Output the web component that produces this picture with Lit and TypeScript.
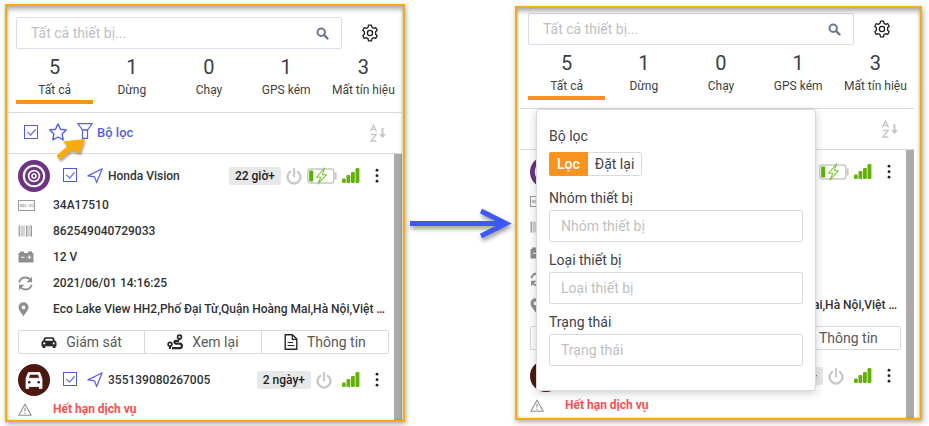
import { LitElement, html, css, svg, nothing } from "lit";
import { customElement, property } from "lit/decorators.js";

interface Stat {
  count: number;
  label: string;
}

interface Device {
  id: string;
  kind: "moto" | "car";
  name: string;
  idle: string;
  charging: boolean;
  rows: { icon: keyof typeof icons; text: string; alert?: boolean }[];
  actions: boolean;
}

const icon = (w: number, h: number, body: unknown) =>
  html`<svg width=${w} height=${h} viewBox="0 0 ${w} ${h}" aria-hidden="true" fill="none">${body}</svg>`;

const icons = {
  search: icon(13, 13, svg`<circle cx="5.200" cy="5.200" r="3.700" stroke="#6b7690" stroke-width="2"/><path d="M8.200 8.200 11.500 11.500" stroke="#6b7690" stroke-width="2.400" stroke-linecap="round"/>`),
  gear: icon(18, 18, svg`<path d="M7.500 1.200h3l.5 2.200 1.500.9 2.200-.7 1.500 2.600-1.600 1.500v2.600l1.600 1.500-1.500 2.600-2.200-.7-1.500.9-.5 2.200h-3L7 14.600l-1.500-.9-2.200.7-1.500-2.600 1.600-1.500V7.700L1.800 6.200l1.500-2.600 2.200.7L7 3.400z" stroke="#1d1f23" stroke-width="1.300" stroke-linejoin="round"/><circle cx="9" cy="9" r="2.600" stroke="#1d1f23" stroke-width="1.300"/>`),
  star: icon(18, 18, svg`<path d="M9 .9 11.500 6.200 17.300 7 13.100 11 14.200 16.800 9 14 3.800 16.800 4.900 11 .7 7 6.500 6.200z" stroke="#5560e0" stroke-width="1.400" stroke-linejoin="round"/>`),
  filter: icon(16, 16, svg`<path d="M.8.700h14.400L10.500 7H5.500z" stroke="#5560e0" stroke-width="1.200" stroke-linejoin="round"/><path d="M5.500 7h5v8.300h-5z" stroke="#5560e0" stroke-width="1.200"/>`),
  sort: icon(18, 18, svg`<path d="M1.500 7.500 4.500 1 7.500 7.500M2.600 5.400h3.800M1.800 10.500h5.400L1.800 17h5.600" stroke="#c4c6c9" stroke-width="1.300"/><path d="M13.500 4v9" stroke="#c4c6c9" stroke-width="2"/><path d="M10 10h7l-3.500 4z" fill="#c4c6c9"/>`),
  moto: icon(32, 32, svg`<circle cx="16" cy="16" r="16" fill="#6c3483"/><circle cx="16" cy="16" r="10.200" stroke="#fff" stroke-width="2"/><circle cx="16" cy="16" r="5.400" stroke="#fff" stroke-width="1.700"/><circle cx="16" cy="16" r="2" stroke="#fff" stroke-width="1.500"/>`),
  car: icon(32, 32, svg`<circle cx="16" cy="16" r="16" fill="#4a1a10"/><path d="M10.300 8.500h11.400l2.300 6.300v9.700h-2.700v-2H10.700v2H8v-9.700zM11.700 10.300l-1.300 4h11.200l-1.300-4z" fill="#fff" fill-rule="evenodd" stroke="#fff" stroke-width=".8" stroke-linejoin="round"/><circle cx="11.300" cy="18.300" r="1.300" fill="#4a1a10"/><circle cx="20.700" cy="18.300" r="1.300" fill="#4a1a10"/>`),
  nav: icon(16, 16, svg`<path d="M15.200.8 9.600 14.600 7.600 8.900.9 7.900z" stroke="#5560e0" stroke-width="1.200" stroke-linejoin="round"/>`),
  power: icon(16, 17, svg`<path d="M5 3.200a6.500 6.500 0 1 0 6 0" stroke="#c9c9c9" stroke-width="2.400"/><path d="M8 1v7.500" stroke="#c9c9c9" stroke-width="2.200" stroke-linecap="round"/>`),
  battery: icon(30, 18, svg`<rect x=".8" y="2" width="26" height="14" rx="2.500" stroke="#c9c9c9" stroke-width="1.400"/><path d="M28 6h1v6h-1z" stroke="#c9c9c9" stroke-width="1.200"/><rect x="2.200" y="3.600" width="4" height="11" rx="1" fill="#58b200"/><path d="M17.500 1 9.500 10.300h4.300L11 17l8.500-9.300h-4z" fill="#fff" stroke="#7cc832" stroke-width="1.100" stroke-linejoin="round"/>`),
  signal: icon(18, 16, svg`<g fill="#63b207"><rect x="0" y="10.500" width="3.800" height="4.500" rx="1.200"/><rect x="4.500" y="7" width="3.800" height="8" rx="1.200"/><rect x="9" y="4" width="3.800" height="11" rx="1.200"/><rect x="13.500" y="0" width="3.900" height="15" rx="1.200"/></g>`),
  dots: icon(4, 16, svg`<g fill="#1d1f23"><circle cx="2" cy="2.200" r="1.400"/><circle cx="2" cy="7.700" r="1.400"/><circle cx="2" cy="13.200" r="1.400"/></g>`),
  plate: icon(18, 11, svg`<rect x=".5" y=".5" width="16" height="10" stroke="#9a9a9a"/><path d="M2.200 7V4.300h1.300V7M2.200 5.800h1.300M4.700 4.300h1.200V7H4.700zM8.300 4.300H7.100V7h1.200M9 5.700h1M11.300 4.300V7M12.400 4.300h.9v1.300h-.9V7h.9M14.300 4.300h.9V7h-.9" stroke="#9a9a9a" stroke-width=".6"/>`),
  barcode: icon(16, 12, svg`<path d="M1 .5v11M4 .5v11M6 .5v11M8.500.5v11M11 .5v11M13.500.5v11" stroke="#a5a5a5" stroke-width="1"/><path d="M1.800.5v11M9 .5v11M13 .5v11" stroke="#8a8a8a" stroke-width=".8"/>`),
  cell: icon(16, 12, svg`<path d="M2 2V.5h4V2h4V.5h4V2h1.500v9.500H.5V2z" fill="#8f8f8f"/><path d="M3 6.300h3.500M9.600 6.300h3.600M11.400 4.500v3.600" stroke="#fff" stroke-width="1.100"/>`),
  refresh: icon(15, 15, svg`<path d="M1.300 6.200C2.200 3 4.600 1.500 7.500 1.500c2 0 3.600.8 4.700 2M13.700 8.800c-.9 3.200-3.300 4.700-6.200 4.700-2 0-3.600-.8-4.700-2" stroke="#8f8f8f" stroke-width="1.800"/><path d="M14 .8v5.400H8.600zM1 14.200V8.800h5.400z" fill="#8f8f8f"/>`),
  pin: icon(11, 15, svg`<path d="M5.500.3a5 5 0 0 1 5 5c0 3.300-3 5.300-5 9.200-2-3.900-5-5.900-5-9.200a5 5 0 0 1 5-5zm0 3.200a1.900 1.900 0 1 0 0 3.800 1.900 1.900 0 0 0 0-3.800z" fill="#8f8f8f" fill-rule="evenodd"/>`),
  warn: icon(14, 13, svg`<path d="M7 1.200 13.200 12.200H.8z" stroke="#8f8f8f" stroke-width="1.100" stroke-linejoin="round"/><path d="M7 4.800v3.700M7 9.700v1.200" stroke="#8f8f8f" stroke-width="1.100"/>`),
  track: icon(16, 13, svg`<path d="M4.300 1.200h7.400c.6 0 1 .3 1.200.8l1 2.700c1 .3 1.600 1.100 1.600 2.100v3.400h-1V12h-2.700v-1.800H4.200V12H1.500v-1.800h-1V6.800c0-1 .6-1.800 1.600-2.100l1-2.700c.2-.5.600-.8 1.200-.8zm.5 1.600-.8 2h8l-.8-2zM3.300 6.300a1.100 1.100 0 1 0 0 2.200 1.100 1.100 0 0 0 0-2.200zm9.400 0a1.100 1.100 0 1 0 0 2.200 1.100 1.100 0 0 0 0-2.200z" fill="#25282c" fill-rule="evenodd"/>`),
  route: icon(16, 16, svg`<circle cx="12.500" cy="3" r="1.900" stroke="#25282c" stroke-width="1.700"/><path d="M12.500 5v1.300M3 12.500v2.600" stroke="#25282c" stroke-width="2"/><circle cx="3" cy="10.300" r="1.900" stroke="#25282c" stroke-width="1.700"/><path d="M12 6.800H9c-2 0-2 2.700 0 2.900h3.800c2.800.3 2.800 4.300 0 4.500H5" stroke="#25282c" stroke-width="2.200"/>`),
  file: icon(14, 16, svg`<path d="M1.200.8h7.300l4.300 4.300v10.100H1.200z" stroke="#25282c" stroke-width="1.400" stroke-linejoin="round"/><path d="M8.300.8v4.500h4.500M3.600 8.500h5.400M3.600 11.500h6.800" stroke="#25282c" stroke-width="1.200"/>`),
};

const stats: Stat[] = [
  { count: 5, label: "Tất cả" },
  { count: 1, label: "Dừng" },
  { count: 0, label: "Chạy" },
  { count: 1, label: "GPS kém" },
  { count: 3, label: "Mất tín hiệu" },
];

const devices: Device[] = [
  {
    id: "honda",
    kind: "moto",
    name: "Honda Vision",
    idle: "22 giờ+",
    charging: true,
    rows: [
      { icon: "plate", text: "34A17510" },
      { icon: "barcode", text: "862549040729033" },
      { icon: "cell", text: "12 V" },
      { icon: "refresh", text: "2021/06/01 14:16:25" },
      { icon: "pin", text: "Eco Lake View HH2,Phố Đại Từ,Quận Hoàng Mai,Hà Nội,Việt Nam" },
    ],
    actions: true,
  },
  {
    id: "car",
    kind: "car",
    name: "355139080267005",
    idle: "2 ngày+",
    charging: false,
    rows: [{ icon: "warn", text: "Hết hạn dịch vụ", alert: true }],
    actions: false,
  },
];

const tick = css`
  .check {
    appearance: none;
    box-sizing: border-box;
    display: grid;
    place-items: center;
    width: 14px;
    height: 14px;
    margin: 0 0 2px;
    border: 1px solid #4f5ae0;
  }
  .check:checked::after {
    content: "";
    width: 4px;
    height: 7px;
    margin-bottom: 2px;
    border: solid #4f5ae0;
    border-width: 0 1px 1px 0;
    transform: rotate(42deg);
  }
`;

@customElement("filter-form")
class FilterForm extends LitElement {
  static styles = css`
    :host {
      display: block;
      box-sizing: border-box;
      padding: 16px 12px;
      background: #fff;
      border: 1px solid #d9d9d9;
      border-radius: 3px;
      box-shadow: 0 2px 8px rgba(0, 0, 0, 0.2);
      font: 14px/20px Roboto, sans-serif;
      color: #3f4347;
    }
    .title,
    .label {
      display: block;
    }
    .actions {
      display: flex;
      margin: 6px 0 12px;
    }
    .btn {
      box-sizing: border-box;
      height: 24px;
      padding: 0 7px;
      font: inherit;
      line-height: 20px;
      color: inherit;
      background: #fff;
      border: 1px solid #d9d9d9;
      border-left: 0;
      border-radius: 0 2px 2px 0;
    }
    .primary {
      font-weight: 500;
      color: #fff;
      background: #f7931e;
      border: 1px solid #f7931e;
      border-radius: 2px 0 0 2px;
    }
    .field {
      box-sizing: border-box;
      display: block;
      width: 100%;
      height: 32px;
      margin: 2px 0 8px;
      padding: 0 11px;
      font: inherit;
      color: inherit;
      background: #fff;
      border: 1px solid #d9d9d9;
      border-radius: 2px;
      outline: none;
    }
    .field::placeholder {
      color: #bfbfbf;
    }
  `;

  render() {
    const fields = ["Nhóm thiết bị", "Loại thiết bị", "Trạng thái"];
    return html`
      <span class="title">Bộ lọc</span>
      <div class="actions">
        <button class="btn primary">Lọc</button>
        <button class="btn">Đặt lại</button>
      </div>
      ${fields.map(
        (f, i) => html`
          <label class="label" for="f${i}">${f}</label>
          <input class="field" id="f${i}" type="text" placeholder=${f} />
        `
      )}
    `;
  }
}

@customElement("device-item")
class DeviceItem extends LitElement {
  @property({ attribute: false }) device!: Device;

  static styles = [
    tick,
    css`
      :host {
        display: block;
        font: 500 12px/18px Roboto, sans-serif;
        color: #2f3337;
      }
      svg {
        display: block;
      }
      .head {
        display: flex;
        align-items: center;
        height: 32px;
      }
      .select {
        margin: 0 10px 2px 13px;
      }
      .icon-btn {
        padding: 0;
        border: 0;
        background: none;
      }
      .name {
        margin-left: 5px;
        flex: 1;
      }
      .idle {
        padding: 0 6px;
        background: #e8e8e8;
        border-radius: 2px;
        color: #1d1f23;
      }
      .power {
        margin: 0 5px;
      }
      .signal {
        margin: 0 15px 0 5px;
      }
      .more {
        margin-right: 10px;
      }
      .row {
        display: flex;
        align-items: center;
        height: 26px;
      }
      .lead {
        flex: none;
        width: 35px;
      }
      .text {
        overflow: hidden;
        white-space: nowrap;
        text-overflow: ellipsis;
      }
      .alert {
        font-weight: 700;
        color: #ff4d4f;
      }
      .actions {
        display: flex;
        margin: 8px 0 10px;
        border: 1px solid #d9d9d9;
        border-radius: 2px;
      }
      .action {
        flex: auto;
        display: flex;
        align-items: center;
        justify-content: center;
        gap: 9px;
        height: 22px;
        padding: 0 12px;
        border: 0;
        background: none;
        font: 14px/20px Roboto, sans-serif;
        color: #595959;
      }
      .action + .action {
        border-left: 1px solid #d9d9d9;
      }
    `,
  ];

  render() {
    const d = this.device;
    return html`
      <div class="head">
        ${icons[d.kind]}
        <input class="check select" type="checkbox" checked aria-label=${d.name} />
        <button class="icon-btn" aria-label="Định vị">${icons.nav}</button>
        <span class="name">${d.name}</span>
        <span class="idle">${d.idle}</span>
        <span class="power">${icons.power}</span>
        ${d.charging ? icons.battery : nothing}
        <span class="signal">${icons.signal}</span>
        <button class="icon-btn more" aria-label="Thêm">${icons.dots}</button>
      </div>
      ${d.rows.map(
        (r) => html`
          <div class="row">
            <span class="lead">${icons[r.icon]}</span>
            <span class="text ${r.alert ? "alert" : ""}">${r.text}</span>
          </div>
        `
      )}
      ${d.actions
        ? html`
            <div class="actions">
              <button class="action">${icons.track}Giám sát</button>
              <button class="action">${icons.route}Xem lại</button>
              <button class="action">${icons.file}Thông tin</button>
            </div>
          `
        : nothing}
    `;
  }
}

@customElement("device-panel")
class DevicePanel extends LitElement {
  @property({ type: Boolean, attribute: "filter-open", reflect: true }) filterOpen = false;

  static styles = [
    tick,
    css`
      :host {
        display: block;
        position: relative;
        box-sizing: border-box;
        overflow: hidden;
        padding: 11px 1px 0;
        border: 2px solid #f9ab0b;
        background: #fff;
        font: 12px/18px Roboto, sans-serif;
        color: #3a3f44;
      }
      :host([filter-open]) {
        padding: 5px 6px 0 3px;
      }
      .shade {
        position: absolute;
        inset: 0;
        box-shadow: inset 0 4px 4px rgba(0, 0, 0, 0.25), inset 0 0 3px rgba(0, 0, 0, 0.2);
        pointer-events: none;
      }
      svg {
        display: block;
      }
      .top {
        display: flex;
        padding: 0 4px 0 8px;
      }
      .search {
        flex: 1;
        display: flex;
        align-items: center;
        box-sizing: border-box;
        height: 32px;
        padding: 0 12px 0 14px;
        border: 1px solid #dcdfe9;
        border-radius: 2px;
      }
      .query {
        flex: 1;
        min-width: 0;
        padding: 0;
        border: 0;
        outline: none;
        background: none;
        font: 14px/20px Roboto, sans-serif;
        color: inherit;
      }
      .query::placeholder {
        color: #bfbfbf;
      }
      .icon-btn {
        padding: 0;
        border: 0;
        background: none;
      }
      .gear {
        display: grid;
        place-items: center;
        width: 56px;
      }
      .stats {
        display: grid;
        grid-template-columns: repeat(5, 1fr);
        margin: 6px 0 8px 8px;
      }
      .stat {
        padding: 0 0 1px;
        border: 0;
        border-bottom: 4px solid transparent;
        background: none;
        font: inherit;
        color: inherit;
        white-space: nowrap;
      }
      .active {
        border-color: #f7931e;
      }
      .count {
        display: block;
        margin-bottom: 2px;
        font-size: 20px;
        line-height: 24px;
      }
      .bar {
        position: relative;
        display: flex;
        align-items: center;
        height: 40px;
        padding: 0 15px 0 16px;
        border: solid #d9d9d9;
        border-width: 1px 0;
      }
      .star {
        margin: 0 10px 2px 11px;
      }
      .filter {
        display: flex;
        align-items: center;
        gap: 4px;
        margin-right: auto;
        font: 500 13px/18px Roboto, sans-serif;
        color: #5560e0;
      }
      .filter svg {
        margin-bottom: 4px;
      }
      .popup {
        position: absolute;
        z-index: 1;
        top: 0;
        left: 16px;
        width: 280px;
      }
      .list {
        display: flex;
      }
      .items {
        flex: 1;
        min-width: 0;
        padding: 6px 5px 0 10px;
      }
      .thumb {
        width: 8px;
        background: #ababab;
      }
      .cursor {
        position: absolute;
        left: 46px;
        top: 22px;
        filter: drop-shadow(1px 2px 1px rgba(0, 0, 0, 0.35));
      }
    `,
  ];

  render() {
    return html`
      <div class="shade"></div>
      <div class="top">
        <div class="search">
          <input class="query" type="text" placeholder="Tất cả thiết bị..." aria-label="Tất cả thiết bị" />
          <button class="icon-btn" aria-label="Tìm kiếm">${icons.search}</button>
        </div>
        <button class="icon-btn gear" aria-label="Cài đặt">${icons.gear}</button>
      </div>
      <div class="stats">
        ${stats.map(
          (s, i) => html`
            <button class="stat ${i === 0 ? "active" : ""}">
              <span class="count">${s.count}</span>${s.label}
            </button>
          `
        )}
      </div>
      <div class="bar">
        <input class="check" type="checkbox" checked aria-label="Chọn tất cả" />
        <button class="icon-btn star" aria-label="Yêu thích">${icons.star}</button>
        <button class="icon-btn filter">${icons.filter}Bộ lọc</button>
        <button class="icon-btn" aria-label="Sắp xếp">${icons.sort}</button>
        ${this.filterOpen
          ? html`<filter-form class="popup"></filter-form>`
          : html`<svg class="cursor" width="34" height="28" viewBox="0 0 34 28" aria-hidden="true">
              <path d="M31 4 9 6.500 13.500 11 2.500 20.500 6 25 17.500 15.500 26 18.500z" fill="#f9ab0b" />
            </svg>`}
      </div>
      <div class="list">
        <div class="items">${devices.map((d) => html`<device-item .device=${d}></device-item>`)}</div>
        <div class="thumb"></div>
      </div>
    `;
  }
}

@customElement("app-root")
class AppRoot extends LitElement {
  static styles = css`
    :host {
      display: grid;
      grid-template-columns: 400fr 110fr 407fr;
      box-sizing: border-box;
      height: 100vh;
      padding: 4px 7px 4px 5px;
      background: #fff;
    }
    .panel {
      min-width: 0;
      box-shadow: 1px 2px 5px rgba(0, 0, 0, 0.35);
    }
    .after {
      margin: 2px 0;
    }
    .arrow {
      place-self: center;
      width: 100%;
      height: 60px;
      padding-top: 20px;
      filter: drop-shadow(1px 3px 2px rgba(0, 0, 0, 0.4));
    }
  `;

  render() {
    return html`
      <device-panel class="panel"></device-panel>
      <svg class="arrow" viewBox="0 0 110 60" fill="none" aria-hidden="true">
        <path d="M5 30.500H97" stroke="#3f57fb" stroke-width="5" />
        <path d="M76 18 101 30.500 76 43" stroke="#3f57fb" stroke-width="5" />
      </svg>
      <device-panel class="panel after" filter-open></device-panel>
    `;
  }
}
